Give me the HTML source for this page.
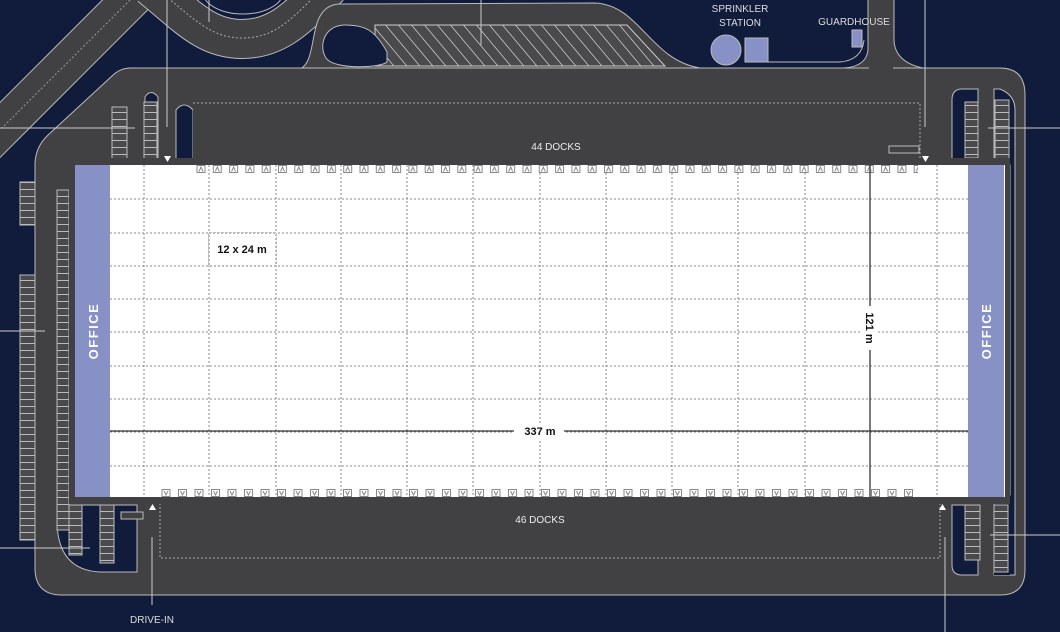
<!DOCTYPE html>
<html><head><meta charset="utf-8"><style>
html,body{margin:0;padding:0;background:#111c3d;}
svg{display:block;font-family:"Liberation Sans",sans-serif;}
</style></head><body>
<svg width="1060" height="632" viewBox="0 0 1060 632" xmlns="http://www.w3.org/2000/svg">
<defs>
<pattern id="stall" patternUnits="userSpaceOnUse" width="40" height="7">
<rect width="40" height="7" fill="#4a4a4c"/><line x1="0" y1="0.5" x2="40" y2="0.5" stroke="#bbb" stroke-width="1"/>
</pattern>
<pattern id="hatch" patternUnits="userSpaceOnUse" width="13" height="60" patternTransform="skewX(40)">
<rect width="13" height="60" fill="#4a4a4c"/><line x1="0.5" y1="0" x2="0.5" y2="60" stroke="#ccc" stroke-width="1"/>
</pattern>
<pattern id="dockT" patternUnits="userSpaceOnUse" x="196" y="165" width="16.3" height="9">
<rect x="1" y="0.5" width="8" height="7" fill="#fff" stroke="#888"/><path d="M3 6.5 L5 2 L7 6.5" fill="none" stroke="#888"/>
</pattern>
<pattern id="dockB" patternUnits="userSpaceOnUse" x="161" y="489" width="16.5" height="9">
<rect x="1" y="0.5" width="8" height="7" fill="#fff" stroke="#888"/><path d="M3 2 L5 6 L7 2" fill="none" stroke="#888"/>
</pattern>
</defs>
<rect width="1060" height="632" fill="#111c3d"/>
<!-- diagonal road -->
<path d="M-20,150 L150,-20" stroke="#bbb" stroke-width="40" fill="none"/>
<path d="M-20,150 L150,-20" stroke="#414042" stroke-width="38" fill="none"/>
<path d="M-10,140 L140,-10" stroke="#999" stroke-width="1" stroke-dasharray="2,2" fill="none"/>
<!-- top loop road -->
<path d="M150,-14 C185,14 205,39 242,39 C280,39 300,14 330,-14" stroke="#bbb" stroke-width="40" fill="none"/>
<path d="M150,-14 C185,14 205,39 242,39 C280,39 300,14 330,-14" stroke="#414042" stroke-width="38" fill="none"/>
<path d="M168,-2 C195,20 212,38 242,38 C275,38 290,20 315,-4" stroke="#aaa" stroke-width="1" stroke-dasharray="2,2" fill="none"/>
<ellipse cx="243" cy="-8" rx="40" ry="22" fill="#111c3d" stroke="#bbb"/>
<!-- top drive loop around hatched parking -->
<path d="M300,69 C320,60 305,5 340,4 L595,3 C640,5 650,60 700,68 Z" fill="#414042" stroke="#bbb"/>
<path d="M375,25 L627,25 L665,66 L375,66 Z" fill="url(#hatch)" stroke="#ccc"/>
<path d="M345,25 C325,25 318,45 326,58 C334,70 380,68 387,62 L387,52 C375,30 365,25 345,25 Z" fill="#111c3d" stroke="#bbb"/>
<!-- guardhouse road -->
<path d="M868,-2 L868,50 Q866,68 840,68 L940,70 Q895,68 894,40 L894,-2 Z" fill="#414042" stroke="#bbb"/>
<path d="M745,62 L840,62 Q862,60 864,40" fill="none" stroke="#bbb"/>
<!-- main ring -->
<path d="M130,68 L1000,68 Q1025,68 1025,95 L1025,570 Q1025,595 1000,595 L62,595 Q35,595 35,568 L35,165 Q35,148 47,136 L112,76 Q120,68 130,68 Z" fill="#414042" stroke="#bbb"/>
<rect x="869" y="62" width="24" height="10" fill="#414042"/>
<!-- navy pockets -->
<path d="M57,190 L57,520 Q57,570 100,572 L137,572 L137,505 L69,505 L69,190 Z" fill="#111c3d" stroke="#bbb"/>
<path d="M70,160 L70,150 Q75,140 90,128 L112,107 L112,165 Z" fill="#414042"/>
<path d="M145,160 L145,97 Q151,88 158,97 L158,160 Z" fill="#111c3d" stroke="#bbb"/>
<path d="M176,165 L176,110 Q184,100 193,110 L193,165 Z" fill="#111c3d" stroke="#bbb"/>
<path d="M952,160 L952,100 Q952,89 962,89 L978,89 L978,160 Z" fill="#111c3d" stroke="#bbb"/>
<path d="M994,160 L994,89 L1000,89 Q1015,95 1015,110 L1015,575 L994,575 Z" fill="#111c3d" stroke="#bbb"/>
<path d="M952,505 L952,565 Q952,575 962,575 L978,575 L978,505 Z" fill="#111c3d" stroke="#bbb"/>
<path d="M994,505 L994,575 L1010,575 L1010,505 Z" fill="#111c3d"/>
<!-- parking stalls -->
<rect x="20" y="182" width="15" height="43" fill="url(#stall)" stroke="#bbb"/>
<rect x="20" y="275" width="15" height="265" fill="url(#stall)" stroke="#bbb"/>
<rect x="57" y="190" width="12" height="340" fill="url(#stall)" stroke="#bbb"/>
<rect x="69" y="505" width="13" height="50" fill="url(#stall)" stroke="#bbb"/>
<rect x="100" y="505" width="14" height="58" fill="url(#stall)" stroke="#bbb"/>
<rect x="112" y="107" width="15" height="53" fill="url(#stall)" stroke="#bbb"/>
<rect x="144" y="102" width="13" height="58" fill="url(#stall)" stroke="#bbb"/>
<rect x="965" y="102" width="13" height="56" fill="url(#stall)" stroke="#bbb"/>
<rect x="995" y="100" width="14" height="60" fill="url(#stall)" stroke="#bbb"/>
<rect x="965" y="505" width="15" height="55" fill="url(#stall)" stroke="#bbb"/>
<rect x="994" y="505" width="14" height="67" fill="url(#stall)" stroke="#bbb"/>
<rect x="1004" y="165" width="6" height="330" fill="#414042" stroke="#bbb"/>
<!-- dock aprons -->
<rect x="193" y="103" width="727" height="62" fill="#414042"/>
<path d="M193,103 L920,103 L920,160" fill="none" stroke="#aaa" stroke-dasharray="2,2"/>
<path d="M160,503 L160,558 L940,558 L940,503" fill="none" stroke="#aaa" stroke-dasharray="2,2"/>
<rect x="889" y="146" width="30" height="7" fill="#414042" stroke="#bbb"/>
<rect x="121" y="512" width="22" height="7" fill="#414042" stroke="#bbb"/>
<!-- building frame -->
<rect x="69" y="158" width="941" height="346" fill="#414042"/>
<rect x="75" y="165" width="930" height="332" fill="#fff"/>
<rect x="75" y="165" width="35" height="332" fill="#8891c6"/>
<rect x="968" y="165" width="36" height="332" fill="#8891c6"/>
<!-- grid -->
<g stroke="#888" stroke-width="1" stroke-dasharray="2,2">
<path d="M144,165V497M209,165V497M276,165V497M341,165V497M407,165V497M473,165V497M540,165V497M606,165V497M672,165V497M738,165V497M805,165V497M937,165V497"/>
<path d="M110,199H968M110,233H968M110,266H968M110,299H968M110,332H968M110,366H968M110,399H968M110,432H968M110,466H968"/>
</g>
<rect x="196" y="165" width="722" height="9" fill="url(#dockT)"/>
<rect x="161" y="489" width="756" height="9" fill="url(#dockB)"/>
<!-- dimensions -->
<line x1="110" y1="431" x2="968" y2="431" stroke="#333" stroke-width="1.3"/>
<rect x="514" y="423" width="50" height="16" fill="#fff"/>
<text x="540" y="435" text-anchor="middle" font-size="11" font-weight="bold" fill="#111">337 m</text>
<line x1="870" y1="165" x2="870" y2="497" stroke="#333" stroke-width="1.3"/>
<rect x="862" y="306" width="16" height="44" fill="#fff"/>
<text transform="translate(866,328) rotate(90)" text-anchor="middle" font-size="11" font-weight="bold" fill="#111">121 m</text>
<rect x="209" y="233" width="67" height="33" fill="#fff" stroke="#777" stroke-dasharray="2,2"/>
<text x="242" y="253" text-anchor="middle" font-size="11" font-weight="bold" fill="#111">12 x 24 m</text>
<text transform="translate(98,331) rotate(-90)" text-anchor="middle" font-size="13" font-weight="bold" fill="#fff" letter-spacing="1.5">OFFICE</text>
<text transform="translate(991,331) rotate(-90)" text-anchor="middle" font-size="13" font-weight="bold" fill="#fff" letter-spacing="1.5">OFFICE</text>
<text x="556" y="150" text-anchor="middle" font-size="10" fill="#eee">44 DOCKS</text>
<text x="540" y="523" text-anchor="middle" font-size="10" fill="#eee">46 DOCKS</text>
<!-- arrows -->
<path d="M164,156 L171,156 L167.5,162 Z M922,156 L929,156 L925.5,162 Z M149,510 L156,510 L152.5,504 Z M939,510 L946,510 L942.5,504 Z" fill="#fff"/>
<!-- buildings -->
<circle cx="726" cy="50" r="15" fill="#8891c6" stroke="#bbb"/>
<rect x="745" y="38" width="23" height="24" fill="#8891c6" stroke="#bbb"/>
<rect x="852" y="30" width="10" height="17" fill="#8891c6" stroke="#bbb"/>
<!-- leader lines -->
<g stroke="#ccc" stroke-width="1" fill="none">
<path d="M167,0V127M481,0V45M925,0V127M0,128H135M988,128H1060M0,331H45M0,548H90M990,535H1060M152,537V605M945,537V632M209,0V22"/>
</g>
<text x="740" y="12" text-anchor="middle" font-size="10" fill="#ddd">SPRINKLER</text>
<text x="740" y="26" text-anchor="middle" font-size="10" fill="#ddd">STATION</text>
<text x="854" y="25" text-anchor="middle" font-size="10" fill="#ddd">GUARDHOUSE</text>
<text x="152" y="623" text-anchor="middle" font-size="10" fill="#ddd">DRIVE-IN</text>
</svg>
</body></html>
